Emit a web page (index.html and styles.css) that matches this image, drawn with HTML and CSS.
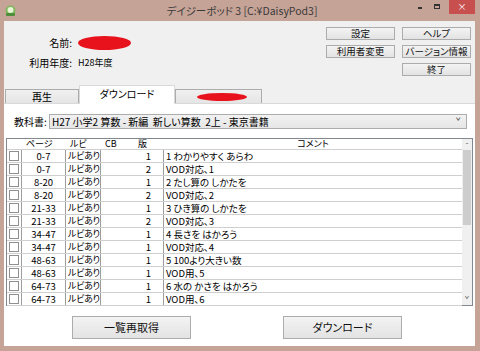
FILE: index.html
```html
<!DOCTYPE html>
<html lang="ja">
<head>
  <meta charset="UTF-8" />
  <title>デイジーポッド 3</title>
  <link rel="stylesheet" href="styles.css">
</head>
<body>
  <div class="window">
    <div class="titlebar">
      <svg class="app-icon" width="11" height="12" viewBox="0 0 11 12">
        <circle cx="5.5" cy="5.5" r="5" fill="#7fb85a" />
        <circle cx="5.5" cy="5" r="3" fill="#e8f3d8" />
        <rect x="1" y="8" width="9" height="3" rx="1" fill="#4f8f3a" />
      </svg>
      <div class="title">デイジーポッド 3 [C:¥DaisyPod3]</div>
      <div class="controls">
        <div class="ctl"><span class="min"></span></div>
        <div class="ctl"><span class="max"></span></div>
        <div class="ctl close">×</div>
      </div>
    </div>

    <div class="client">
      <div class="top">
        <div class="user">
          <span class="label">名前:</span>
          <span class="blot name-blot"></span>
          <span class="label">利用年度:</span>
          <span class="value">H28年度</span>
        </div>
        <div class="menu">
          <button class="btn">設定</button>
          <button class="btn">ヘルプ</button>
          <button class="btn">利用者変更</button>
          <button class="btn">バージョン情報</button>
          <span></span>
          <button class="btn">終了</button>
        </div>
      </div>

      <div class="tabs">
        <div class="tab tab-play">再生</div>
        <div class="tab tab-active">ダウンロード</div>
        <div class="tab tab-other"><span class="blot tab-blot"></span></div>
      </div>

      <div class="panel">
        <div class="book-row">
          <span class="book-label">教科書:</span>
          <div class="select">
            <span>H27 小学2 算数 - 新編&nbsp; 新しい算数&nbsp; 2上 - 東京書籍</span>
            <span class="chev">&#x2C7;</span>
          </div>
        </div>

        <div class="list">
          <div class="grid">
            <div class="row head">
              <div class="cell"></div>
              <div class="cell">ページ</div>
              <div class="cell">ルビ</div>
              <div class="cell">CB</div>
              <div class="cell">版</div>
              <div class="cell c-comment">コメント</div>
            </div>
            <div id="rows"></div>
          </div>
          <div class="scrollbar">
            <div class="arrow">&#x2C6;</div>
            <div class="thumb"></div>
            <div class="track"></div>
            <div class="arrow">&#x2C7;</div>
          </div>
        </div>

        <div class="actions">
          <button class="btn big">一覧再取得</button>
          <button class="btn big">ダウンロード</button>
        </div>
      </div>
    </div>
  </div>

  <script>
    const items = [
      ['0-7', 1, '1 わかりやすく あらわ'],
      ['0-7', 2, 'VOD対応、1'],
      ['8-20', 1, '2 たし算の しかたを'],
      ['8-20', 2, 'VOD対応、2'],
      ['21-33', 1, '3 ひき算の しかたを'],
      ['21-33', 2, 'VOD対応、3'],
      ['34-47', 1, '4 長さを はかろう'],
      ['34-47', 1, 'VOD対応、4'],
      ['48-63', 1, '5 100より大きい数'],
      ['48-63', 1, 'VOD用、5'],
      ['64-73', 1, '6 水の かさを はかろう'],
      ['64-73', 1, 'VOD用、6']
    ];

    const rows = document.getElementById('rows');
    items.forEach(([page, ver, comment]) => {
      const row = document.createElement('div');
      row.className = 'row';
      row.innerHTML =
        '<div class="cell c-check"><span class="check"></span></div>' +
        '<div class="cell c-page">' + page + '</div>' +
        '<div class="cell c-ruby">ルビあり</div>' +
        '<div class="cell c-cb"></div>' +
        '<div class="cell c-ver">' + ver + '</div>' +
        '<div class="cell c-comment">' + comment + '</div>';
      rows.appendChild(row);
    });
  </script>
</body>
</html>
```

FILE: styles.css
```css
/* === Basic Reset === */
* {
  margin: 0;
  padding: 0;
  box-sizing: border-box;
}

body {
  width: 480px;
  height: 351px;
  overflow: hidden;
  background: #c6a397;
  font-family: "Noto Sans CJK JP", sans-serif;
  font-feature-settings: "palt";
  font-size: 10px;
  color: #000;
}

.window {
  height: 351px;
  display: flex;
  flex-direction: column;
}

/* === Title bar === */
.titlebar {
  height: 21px;
  display: grid;
  grid-template-columns: 1fr auto 1fr;
  align-items: start;
}

.app-icon {
  margin: 5px 0 0 5px;
}

.title {
  font-size: 10.5px;
  line-height: 21px;
  color: #3a3a3a;
  padding-left: 4px;
}

.controls {
  justify-self: end;
  display: flex;
  margin-right: 5px;
}

.ctl {
  width: 16px;
  height: 14px;
  position: relative;
}

.min {
  position: absolute;
  left: 3px;
  top: 7px;
  width: 4px;
  height: 2px;
  background: #333;
}

.max {
  position: absolute;
  left: 3px;
  top: 4px;
  width: 6px;
  height: 5px;
  border: 1px solid #333;
  border-top-width: 2px;
}

.close {
  width: 26px;
  margin-left: 2px;
  background: #c7504f;
  color: #fff;
  font-size: 9px;
  line-height: 14px;
  text-align: center;
}

/* === Client area === */
.client {
  flex: 1;
  margin: 0 5px 5px 4px;
  background: #f0f0f0;
  display: flex;
  flex-direction: column;
}

.top {
  height: 64px;
  display: flex;
  justify-content: space-between;
  padding: 6px 4px 0 0;
}

.user {
  display: grid;
  grid-template-columns: 68px 60px;
  grid-auto-rows: 14px;
  column-gap: 6px;
  row-gap: 6px;
  margin-top: 9px;
  align-items: center;
}

.label {
  text-align: right;
  line-height: 14px;
}

.value {
  font-size: 9px;
  line-height: 14px;
}

.blot {
  display: block;
  background: #e8121c;
  border-radius: 50%;
}

.name-blot {
  width: 53px;
  height: 14px;
}

.menu {
  display: grid;
  grid-template-columns: 69px 69px;
  grid-auto-rows: 13px;
  column-gap: 7px;
  row-gap: 5px;
}

.btn {
  font-family: inherit;
  font-feature-settings: "palt";
  font-size: 9.5px;
  line-height: 11px;
  color: #111;
  background: linear-gradient(#f3f3f3, #e3e3e3);
  border: 1px solid #acacac;
  white-space: nowrap;
  overflow: hidden;
}

/* === Tabs === */
.tabs {
  height: 18px;
  display: flex;
  align-items: flex-end;
  padding-left: 1px;
  position: relative;
  z-index: 1;
}

.tab {
  height: 14px;
  display: flex;
  align-items: center;
  justify-content: center;
  background: linear-gradient(#f0f0f0, #e5e5e5);
  border: 1px solid #acacac;
  border-bottom: none;
  line-height: 12px;
}

.tab-play {
  width: 74px;
}

.tab-active {
  width: 96px;
  height: 19px;
  margin-bottom: -1px;
  padding-bottom: 2px;
  background: #fff;
  border-color: #d9d9d9;
}

.tab-other {
  width: 87px;
  justify-content: flex-start;
  padding-left: 21px;
}

.tab-blot {
  width: 50px;
  height: 8px;
}

/* === Panel === */
.panel {
  flex: 1;
  background: #fff;
  border-top: 1px solid #d9d9d9;
  display: flex;
  flex-direction: column;
}

.book-row {
  display: flex;
  align-items: center;
  margin: 10px 0 0 10px;
}

.book-label {
  width: 35px;
  line-height: 15px;
}

.select {
  width: 418px;
  height: 15px;
  border: 1px solid #acacac;
  background: linear-gradient(#f2f2f2, #e6e6e6);
  padding: 0 5px 0 2px;
  display: flex;
  justify-content: space-between;
  align-items: center;
  line-height: 13px;
}

.chev {
  font-size: 9px;
  color: #444;
}

/* === List === */
.list {
  margin: 9px 2px 0;
  height: 168px;
  border: 1px solid #828790;
  display: flex;
}

.grid {
  flex: 1;
}

.row {
  display: grid;
  grid-template-columns: 15px 44px 35px 33px 30px 1fr;
  height: 13px;
  border-bottom: 1px solid #cfcfcf;
}

.cell {
  border-right: 1px solid #9d9d9d;
  font-size: 9.5px;
  line-height: 12px;
  white-space: nowrap;
}

.c-cb,
.row .c-comment {
  border-right: none;
}

.head {
  height: 11px;
}

.head .cell {
  border-right: none;
  padding-left: 4px;
  font-size: 9px;
  line-height: 10px;
}

.head .c-comment {
  text-align: center;
  padding-left: 0;
}

.c-check {
  display: flex;
  align-items: center;
  padding-left: 2px;
}

.check {
  width: 10px;
  height: 10px;
  border: 1px solid #8e8f8f;
  background: #fff;
}

.c-page {
  text-align: center;
}

.c-ruby {
  padding-left: 2px;
  font-size: 9px;
  letter-spacing: -0.3px;
}

.c-ver {
  text-align: center;
}

.c-comment {
  padding-left: 2px;
}

.scrollbar {
  width: 10px;
  background: #f0f0f0;
  display: flex;
  flex-direction: column;
}

.arrow {
  height: 11px;
  font-size: 8px;
  line-height: 11px;
  text-align: center;
  color: #606060;
}

.thumb {
  height: 75px;
  margin: 0 1px;
  background: #cdcdcd;
}

.track {
  flex: 1;
}

/* === Bottom buttons === */
.actions {
  display: flex;
  gap: 92px;
  padding-left: 68px;
  margin-top: 10px;
}

.big {
  width: 119px;
  height: 23px;
  font-size: 11px;
  line-height: 21px;
}
```
